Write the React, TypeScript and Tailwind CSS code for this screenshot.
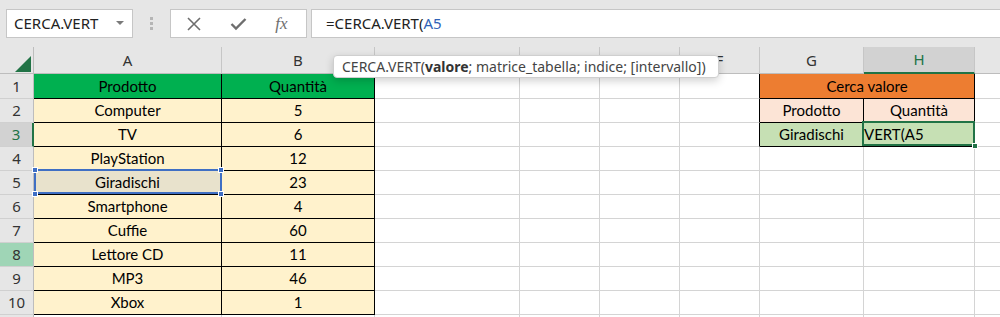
import React from "react";

const UI = "font-['Noto_Sans',sans-serif]";
const CELLF = "font-['Lato',sans-serif]";

type CellProps = {
  children?: React.ReactNode;
  bg?: string;
  r?: string;
  b?: string;
  align?: string;
  span?: string;
  extra?: React.ReactNode;
};

function Cell({ children, bg = "bg-white", r = "border-r-[#d4d4d4]", b = "border-b-[#d4d4d4]", align = "justify-center", span = "", extra }: CellProps) {
  return (
    <div className={`relative flex items-center ${align} ${bg} border-r border-b ${r} ${b} ${span} text-[15px] text-black ${CELLF} whitespace-nowrap`}>
      {children}
      {extra}
    </div>
  );
}

function RowHead({ n, cls = "" }: { n?: number; cls?: string }) {
  return (
    <div className={`flex items-center justify-center border-b border-r border-b-[#d0d0d0] border-r-[#bdbdbd] text-[15px] text-[#333] ${UI} ${cls}`}>{n}</div>
  );
}

function ColHead({ l, cls = "" }: { l: string; cls?: string }) {
  return (
    <div className={`flex items-center justify-center border-r border-b border-r-[#c6c6c6] border-b-[#bdbdbd] text-[15px] text-[#333] ${UI} ${cls}`}>{l}</div>
  );
}

const BLK = "border-r-black";
const BLKB = "border-b-black";
const CREAM = "bg-[#fff2cc]";

const data: [string, string][] = [
  ["Computer", "5"],
  ["TV", "6"],
  ["PlayStation", "12"],
  ["Giradischi", "23"],
  ["Smartphone", "4"],
  ["Cuffie", "60"],
  ["Lettore CD", "11"],
  ["MP3", "46"],
  ["Xbox", "1"],
];

function Handle({ cls }: { cls: string }) {
  return <div className={`absolute w-[6px] h-[6px] bg-[#3f6fc4] border border-white z-20 ${cls}`} />;
}

export default function App() {
  return (
    <div className="relative w-[1000px] h-[317px] overflow-hidden bg-[#e6e6e6]">
      {/* toolbar */}
      <div className="h-[47px] flex items-start pt-[9px] pl-[6px]">
        <div className={`w-[127px] h-[29px] bg-white border border-[#c6c6c6] flex items-center pl-[7px] pr-[8px] ${UI} text-[15px] text-[#222]`}>
          <span className="flex-1">CERCA.VERT</span>
          <svg width="8" height="5" viewBox="0 0 8 5"><path d="M0 0h8L4 4z" fill="#7a7a7a" /></svg>
        </div>
        <div className="w-[37px] h-[29px] flex flex-col items-center justify-center gap-[2px]">
          <div className="w-[3px] h-[3px] bg-[#b5b5b5]" />
          <div className="w-[3px] h-[3px] bg-[#b5b5b5]" />
          <div className="w-[3px] h-[3px] bg-[#b5b5b5]" />
        </div>
        <div className="w-[137px] h-[29px] bg-white border border-[#c6c6c6] flex items-center">
          <div className="w-[46px] flex justify-center">
            <svg width="14" height="14" viewBox="0 0 14 14"><path d="M1 1L13 13M13 1L1 13" stroke="#6e6e6e" strokeWidth="1.6" /></svg>
          </div>
          <div className="w-[42px] flex justify-center">
            <svg width="17" height="14" viewBox="0 0 17 14"><path d="M1.5 7L6 11.5L15.5 2" stroke="#6e6e6e" strokeWidth="2.4" fill="none" /></svg>
          </div>
          <div className="flex-1 flex justify-center pr-[2px]">
            <span className="font-['Liberation_Serif',serif] italic text-[17px] text-[#6e6e6e] leading-none">fx</span>
          </div>
        </div>
        <div className="w-[4px]" />
        <div className={`flex-1 h-[29px] bg-white border border-[#c6c6c6] border-r-0 flex items-center pl-[14px] ${UI} text-[15px] text-[#222]`}>
          =CERCA.VERT(<span className="text-[#2f63b8]">A5</span>
        </div>
      </div>

      {/* grid */}
      <div className="grid grid-cols-[34px_188px_153px_145px_80px_80px_80px_104px_111px_1fr] grid-rows-[27px_25px_repeat(10,24px)]">
        {/* header */}
        <div className="relative border-r border-b border-r-[#bdbdbd] border-b-[#bdbdbd]">
          <svg className="absolute left-[15px] top-[9px]" width="16" height="16" viewBox="0 0 16 16">
            <path d="M16 0V16H0Z" fill="#217346" />
          </svg>
        </div>
        <ColHead l="A" />
        <ColHead l="B" />
        <ColHead l="C" />
        <ColHead l="D" />
        <ColHead l="E" />
        <ColHead l="F" />
        <ColHead l="G" />
        <ColHead l="H" cls="bg-[#d2d2d2] !border-b-2 !border-b-[#217346] text-[#217346]" />
        <ColHead l="" cls="border-r-0" />

        {/* row 1 */}
        <RowHead n={1} />
        <Cell bg="bg-[#00b050]" r={BLK} b={BLKB}>Prodotto</Cell>
        <Cell bg="bg-[#00b050]" r={BLK} b={BLKB}>Quantità</Cell>
        <Cell />
        <Cell />
        <Cell />
        <Cell r={BLK} />
        <Cell bg="bg-[#ed7d31]" r={BLK} b={BLKB} span="col-span-2">Cerca valore</Cell>
        <Cell r="border-r-0" />

        {data.map(([p, q], i) => {
          const row = i + 2;
          const sel = row === 5;
          return (
            <React.Fragment key={row}>
              <RowHead
                n={row}
                cls={
                  row === 3
                    ? "bg-[#d2d2d2] text-[#217346] !border-r-2 !border-r-[#217346]"
                    : row === 8
                    ? "bg-[#9fd5b6]"
                    : ""
                }
              />
              <Cell
                bg={sel ? "bg-[#e8e2cc]" : CREAM}
                r={BLK}
                b={BLKB}
                extra={
                  sel ? (
                    <>
                      <div className="absolute left-0 top-[-2px] right-[-1px] bottom-0 border-2 border-[#3f6fc4] z-10 pointer-events-none" />
                      <Handle cls="left-[-2px] top-[-4px]" />
                      <Handle cls="right-[-3px] top-[-4px]" />
                      <Handle cls="left-[-2px] bottom-[-3px]" />
                      <Handle cls="right-[-3px] bottom-[-3px]" />
                    </>
                  ) : null
                }
              >
                {p}
              </Cell>
              <Cell bg={CREAM} r={BLK} b={BLKB}>{q}</Cell>
              <Cell />
              <Cell />
              <Cell />
              <Cell r={row <= 3 ? BLK : undefined} />
              {row === 2 ? (
                <>
                  <Cell bg="bg-[#fce4d6]" r={BLK} b={BLKB}>Prodotto</Cell>
                  <Cell bg="bg-[#fce4d6]" r={BLK} b={BLKB}>Quantità</Cell>
                </>
              ) : row === 3 ? (
                <>
                  <Cell bg="bg-[#c6e0b4]" r={BLK} b={BLKB}>Giradischi</Cell>
                  <Cell
                    bg="bg-[#c6e0b4]"
                    r={BLK}
                    b={BLKB}
                    align="justify-start"
                    extra={
                      <>
                        <div className="absolute left-[-2px] top-[-2px] right-[-1px] bottom-0 border-2 border-[#217346] z-10 pointer-events-none" />
                        <div className="absolute right-[-4px] bottom-[-3px] w-[6px] h-[6px] bg-[#217346] border border-white z-20" />
                      </>
                    }
                  >
                    <span>VERT(A5</span>
                  </Cell>
                </>
              ) : (
                <>
                  <Cell />
                  <Cell />
                </>
              )}
              <Cell r="border-r-0" />
            </React.Fragment>
          );
        })}

        {/* row 11 (only its top edge is in view) */}
        <RowHead />
        <Cell />
        <Cell />
        <Cell />
        <Cell />
        <Cell />
        <Cell />
        <Cell />
        <Cell />
        <Cell r="border-r-0" />
      </div>

      {/* tooltip */}
      <div
        className={`absolute left-[333px] top-[55px] w-[386px] h-[23px] bg-white border border-[#cfcfcf] rounded-[4px] shadow-[0_3px_8px_rgba(0,0,0,0.18)] flex items-center pl-[8px] ${UI} text-[14px] text-[#444] whitespace-nowrap z-30`}
      >
        CERCA.VERT(<b className="font-bold text-[#333]">valore</b>; matrice_tabella; indice; [intervallo])
      </div>
    </div>
  );
}
